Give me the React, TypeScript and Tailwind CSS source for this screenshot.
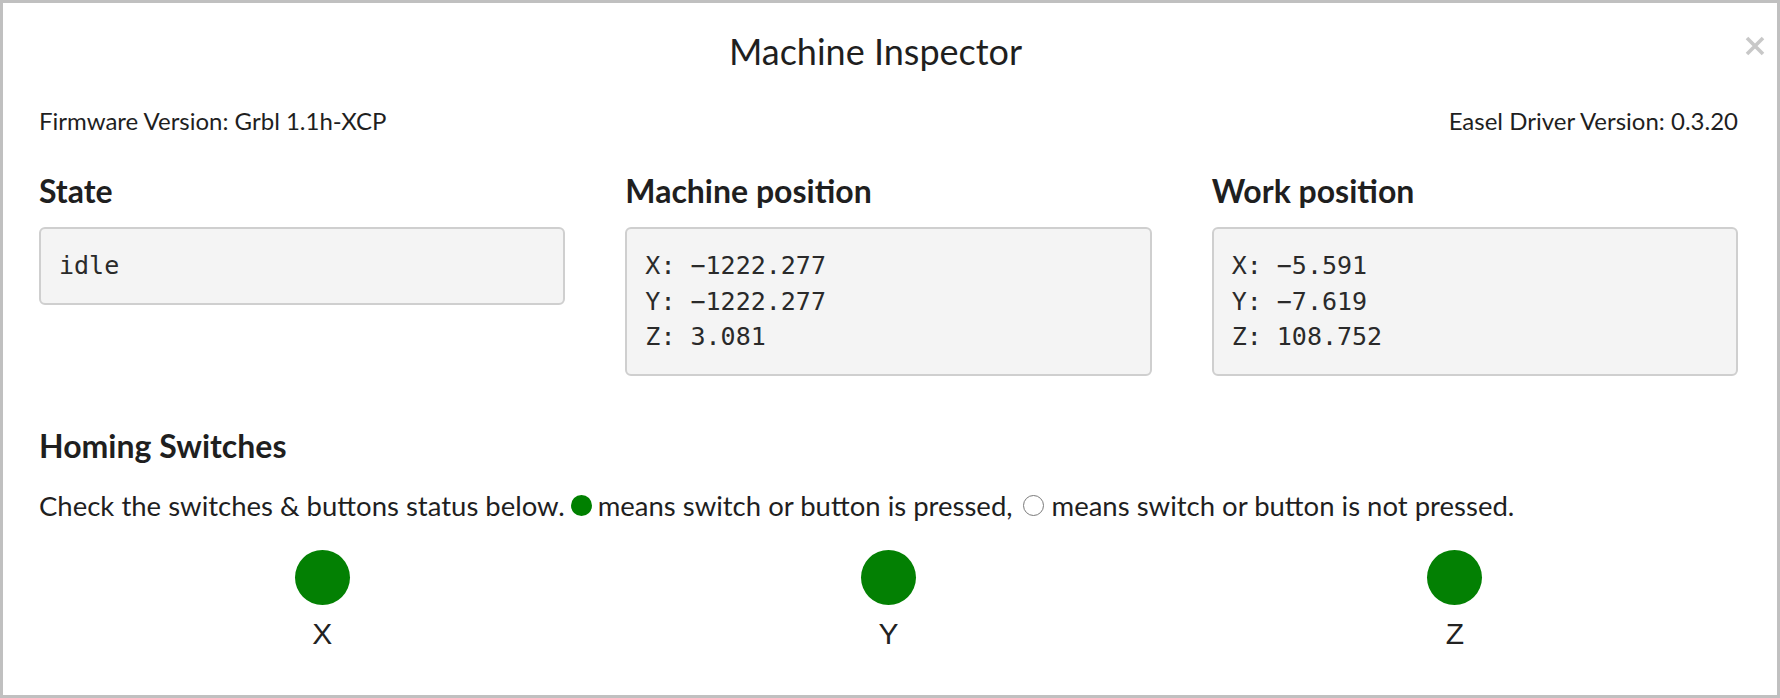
const positions = {
  machine: ["X: \u22121222.277", "Y: \u22121222.277", "Z: 3.081"],
  work: ["X: \u22125.591", "Y: \u22127.619", "Z: 108.752"],
};

const switches = ["X", "Y", "Z"];

const ReadoutBox = ({ lines }: { lines: string[] }) => (
  <div className="border-2 border-[#cfcfcf] bg-[#f4f4f4] rounded-[6px] px-[18px] py-[19px] font-['DejaVu_Sans_Mono',monospace] text-[25px] leading-[35.5px] text-[#2a2a2a]">
    {lines.map((l) => (
      <div key={l}>{l}</div>
    ))}
  </div>
);

const Section = ({ title, lines }: { title: string; lines: string[] }) => (
  <div className="flex flex-col">
    <h2 className="text-[32px] leading-[34px] font-bold text-[#1f1f1f]">{title}</h2>
    <div className="mt-[19px]">
      <ReadoutBox lines={lines} />
    </div>
  </div>
);

export default function App() {
  return (
    <div className="w-[1780px] h-[698px] bg-white border-[3px] border-[#c0c0c0] relative font-['Lato',sans-serif] text-[#1f1f1f] pl-[36px] pr-[39px] pt-[28px]">
      <button className="absolute top-[33px] right-[12px] w-[20px] h-[20px]">
        <svg viewBox="0 0 20 20" className="w-[20px] h-[20px]">
          <path d="M2 2 L18 18 M18 2 L2 18" stroke="#c8c8c8" strokeWidth="3.6" strokeLinecap="butt" />
        </svg>
      </button>

      <div className="pr-[26px] text-center">
        <h1 className="text-[36px] leading-[40px] font-normal">Machine Inspector</h1>
      </div>

      <div className="flex justify-between mt-[38px] text-[24px] leading-[24px]">
        <span>Firmware Version: Grbl 1.1h-XCP</span>
        <span>Easel Driver Version: 0.3.20</span>
      </div>

      <div className="grid grid-cols-3 gap-[60px] mt-[41px] items-start">
        <Section title="State" lines={["idle"]} />
        <Section title="Machine position" lines={positions.machine} />
        <Section title="Work position" lines={positions.work} />
      </div>

      <h2 className="mt-[53px] text-[32px] leading-[34px] font-bold">Homing Switches</h2>

      <p className="mt-[28px] text-[27.5px] leading-[30px] flex items-center">
        <span>Check the switches &amp; buttons status below.</span>
        <span className="inline-block w-[21px] h-[21px] rounded-full bg-[#008000] mx-[6px]" />
        <span>means switch or button is pressed,</span>
        <span className="inline-block w-[21px] h-[21px] rounded-full border-[1.5px] border-[#7a7a7a] ml-[10px] mr-[8px]" />
        <span>means switch or button is not pressed.</span>
      </p>

      <div className="grid grid-cols-3 mt-[29px]">
        {switches.map((s) => (
          <div key={s} className="flex flex-col items-center">
            <div className="w-[55px] h-[55px] rounded-full bg-[#038003]" />
            <span className="mt-[11px] font-['Liberation_Sans',Arial,sans-serif] text-[30px] leading-[36px] text-[#222]">
              {s}
            </span>
          </div>
        ))}
      </div>
    </div>
  );
}
